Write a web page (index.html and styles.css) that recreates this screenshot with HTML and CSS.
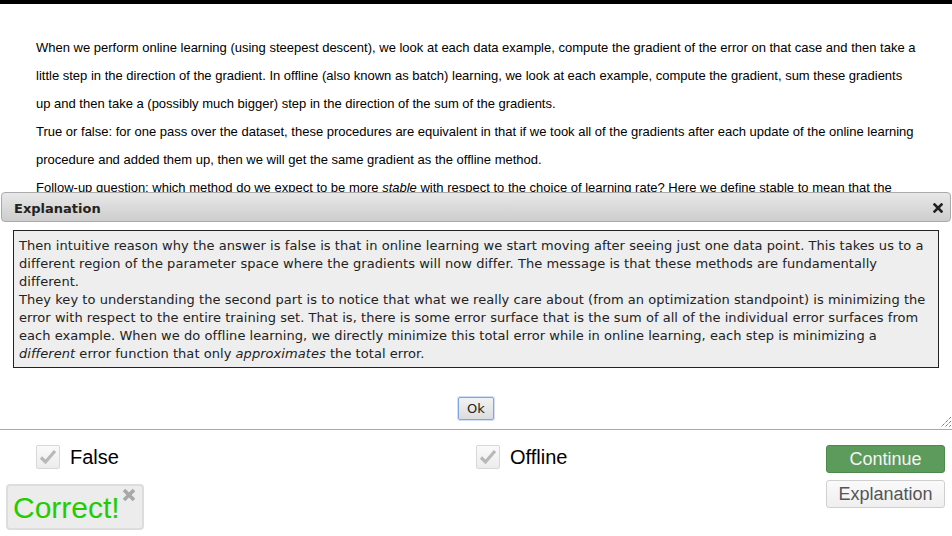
FILE: index.html
```html
<!DOCTYPE html>
<html>
<head>
<meta charset="utf-8">
<link rel="stylesheet" href="styles.css">
</head>
<body>
<div class="topbar"></div>
<div class="stage">
  <div class="question">
    <p>When we perform online learning (using steepest descent), we look at each data example, compute the gradient of the error on that case and then take a little step in the direction of the gradient. In offline (also known as batch) learning, we look at each example, compute the gradient, sum these gradients up and then take a (possibly much bigger) step in the direction of the sum of the gradients.</p>
    <p>True or false: for one pass over the dataset, these procedures are equivalent in that if we took all of the gradients after each update of the online learning procedure and added them up, then we will get the same gradient as the offline method.</p>
    <p>Follow-up question: which method do we expect to be more <em>stable</em> with respect to the choice of learning rate? Here we define stable to mean that the optimization converges.</p>
  </div>
  <div class="dialog">
    <div class="dlg-head">
      <span class="dlg-title">Explanation</span>
      <svg class="dlg-close" width="10" height="10" viewBox="0 0 10 10"><path d="M1.5 1.5 L8.5 8.5 M8.5 1.5 L1.5 8.5" stroke="#222" stroke-width="2.6" stroke-linecap="square"/></svg>
    </div>
    <div class="dlg-body">
      <div class="expl">Then intuitive reason why the answer is false is that in online learning we start moving after seeing just one data point. This takes us to a different region of the parameter space where the gradients will now differ. The message is that these methods are fundamentally different.<br>They key to understanding the second part is to notice that what we really care about (from an optimization standpoint) is minimizing the error with respect to the entire training set. That is, there is some error surface that is the sum of all of the individual error surfaces from each example. When we do offline learning, we directly minimize this total error while in online learning, each step is minimizing a <em>different</em> error function that only <em>approximates</em> the total error.</div>
    </div>
    <div class="dlg-foot">
      <button class="ok">Ok</button>
    </div>
    <svg class="grip" width="12" height="12" viewBox="0 0 12 12"><path d="M11 1 L1 11 M11 5 L5 11 M11 9 L9 11" stroke="#444" stroke-width="1" stroke-dasharray="1 1"/></svg>
  </div>
</div>
<div class="footer">
  <div class="left">
    <div class="options">
      <label class="opt opt1"><span class="cb"><svg width="18" height="16" viewBox="0 0 18 16"><path d="M2 8.5 L6.5 13 L16 2" fill="none" stroke="#b8b8b8" stroke-width="3.2"/></svg></span>False</label>
      <label class="opt"><span class="cb"><svg width="18" height="16" viewBox="0 0 18 16"><path d="M2 8.5 L6.5 13 L16 2" fill="none" stroke="#b8b8b8" stroke-width="3.2"/></svg></span>Offline</label>
    </div>
    <div class="correct">Correct!<svg class="cx" width="14" height="14" viewBox="0 0 14 14"><path d="M2 2 L12 12 M12 2 L2 12" stroke="#a8a8a8" stroke-width="3.6"/></svg></div>
  </div>
  <div class="buttons">
    <button class="btn continue">Continue</button>
    <button class="btn explain">Explanation</button>
  </div>
</div>
</body>
</html>
```

FILE: styles.css
```css
html, body {
  margin: 0;
  padding: 0;
  background: #fff;
  width: 952px;
  height: 536px;
  overflow: hidden;
}
.topbar {
  height: 4px;
  background: #000;
}
.stage {
  position: relative;
  height: 425px;
  overflow: hidden;
}
.question {
  padding: 30px 36px 0 36px;
  font-family: "Liberation Sans", Arial, sans-serif;
  font-size: 13px;
  line-height: 28px;
  color: #000;
}
.question p {
  margin: 0;
}
.dialog {
  position: absolute;
  left: 0;
  top: 188px;
  width: 952px;
  height: 237px;
  background: #fff;
  font-family: "DejaVu Sans", Verdana, sans-serif;
  font-size: 13px;
}
.dlg-head {
  margin: 0 1px 0 1px;
  height: 28px;
  box-sizing: border-box;
  height: 30px;
  border: 1px solid #aaa;
  border-radius: 4px;
  background: linear-gradient(#e8e8e8, #cdcdcd);
  display: flex;
  align-items: center;
  justify-content: space-between;
  padding: 2px 7px 0 12px;
}
.dlg-title {
  font-weight: bold;
  color: #222;
}
.dlg-close {
  display: block;
  margin-top: 0;
}
.dlg-body {
  padding: 8px 13px 0 13px;
}
.expl {
  background: #eee;
  border: 1px solid #222;
  padding: 6px 5px 4px 5px;
  line-height: 18px;
  letter-spacing: 0.05px;
  color: #222;
}
.dlg-foot {
  display: flex;
  justify-content: center;
  padding-top: 29px;
}
.ok {
  font-family: "DejaVu Sans", Verdana, sans-serif;
  font-size: 13px;
  color: #222;
  height: 23px;
  padding: 0 8px;
  margin-left: 0;
  border: 1px solid #7da7e0;
  border-radius: 2px;
  background: linear-gradient(#f2f2f2, #dcdcdc);
  box-shadow: 0 0 0 1px #cfe0f8;
}
.grip {
  position: absolute;
  right: 0;
  bottom: 1px;
}
.footer {
  border-top: 1px solid #aaa;
  display: flex;
  justify-content: space-between;
  font-family: "Liberation Sans", Arial, sans-serif;
}
.left {
  display: flex;
  flex-direction: column;
}
.options {
  display: flex;
  padding-top: 15px;
  padding-left: 36px;
}
.opt {
  display: flex;
  align-items: center;
  font-size: 20px;
  color: #000;
  height: 24px;
}
.opt1 {
  width: 440px;
}
.cb {
  width: 22px;
  height: 22px;
  border: 1px solid #d8d8d8;
  border-radius: 2px;
  background: linear-gradient(#fafafa, #ececec);
  display: flex;
  align-items: center;
  justify-content: center;
  margin-right: 10px;
}
.cb svg {
  display: block;
}
.correct {
  margin: 15px 0 0 6px;
  width: 138px;
  height: 46px;
  box-sizing: border-box;
  border: 2px solid #ddd;
  border-radius: 4px;
  background: #ececec;
  color: #22cc00;
  font-size: 30px;
  line-height: 44px;
  padding-left: 5px;
  position: relative;
}
.cx {
  position: absolute;
  right: 6px;
  top: 2px;
}
.buttons {
  display: flex;
  flex-direction: column;
  gap: 7px;
  padding-top: 15px;
  padding-right: 7px;
}
.btn {
  width: 119px;
  height: 28px;
  font-family: "Liberation Sans", Arial, sans-serif;
  font-size: 18px;
  border-radius: 3px;
  padding: 0;
}
.continue {
  background: #5d9b5d;
  border: 1px solid #4c8a4c;
  color: #f4f4f4;
}
.explain {
  background: linear-gradient(#fafafa, #efefef);
  border: 1px solid #cfcfcf;
  color: #555;
}
```
